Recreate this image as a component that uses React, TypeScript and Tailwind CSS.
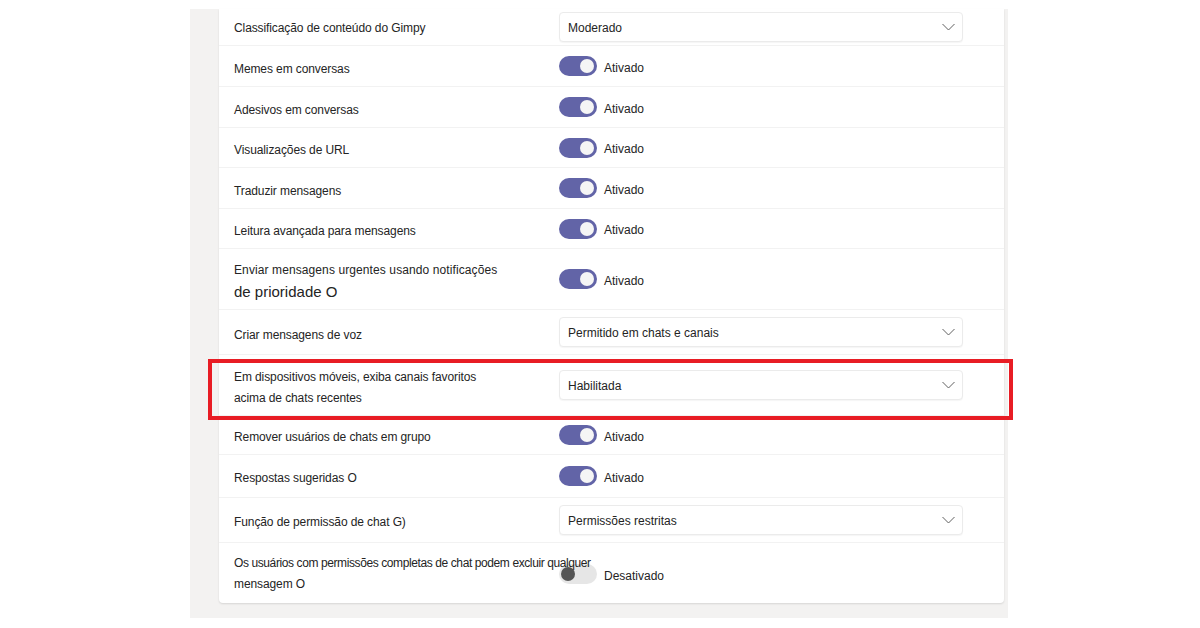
import React from 'react';

type Row = {
  label: React.ReactNode;
  kind: 'select' | 'on' | 'off';
  value?: string;
  h: string;
  nudge: string;
  boxed?: boolean;
};

const rows: Row[] = [
  { label: 'Classificação de conteúdo do Gimpy', kind: 'select', value: 'Moderado', h: 'h-[37px]', nudge: 'mt-[3px]' },
  { label: 'Memes em conversas', kind: 'on', h: 'h-[41px]', nudge: 'mt-[7px]' },
  { label: 'Adesivos em conversas', kind: 'on', h: 'h-[41px]', nudge: 'mt-[6px]' },
  { label: 'Visualizações de URL', kind: 'on', h: 'h-[40px]', nudge: 'mt-[6px]' },
  { label: 'Traduzir mensagens', kind: 'on', h: 'h-[41px]', nudge: 'mt-[6px]' },
  { label: 'Leitura avançada para mensagens', kind: 'on', h: 'h-[40px]', nudge: 'mt-[5px]' },
  {
    label: (
      <>
        <span className="tracking-[0.1px]">Enviar mensagens urgentes usando notificações</span>
        <br />
        <span className="text-[15px] leading-[21px] tracking-normal">de prioridade O</span>
      </>
    ),
    kind: 'on',
    h: 'h-[61px]',
    nudge: 'mt-[6px]',
  },
  { label: 'Criar mensagens de voz', kind: 'select', value: 'Permitido em chats e canais', h: 'h-[45px]', nudge: 'mt-[7px]' },
  {
    label: (
      <>
        Em dispositivos móveis, exiba canais favoritos
        <br />
        acima de chats recentes
      </>
    ),
    kind: 'select',
    value: 'Habilitada',
    h: 'h-[61px]',
    nudge: 'mt-[5px]',
    boxed: true,
  },
  { label: 'Remover usuários de chats em grupo', kind: 'on', h: 'h-[39px]', nudge: 'mt-[4px]' },
  { label: 'Respostas sugeridas O', kind: 'on', h: 'h-[43px]', nudge: 'mt-[4px]' },
  { label: 'Função de permissão de chat G)', kind: 'select', value: 'Permissões restritas', h: 'h-[45px]', nudge: 'mt-[4px]' },
  {
    label: (
      <>
        <span className="tracking-[-0.4px]">Os usuários com permissões completas de chat podem excluir qualquer</span>
        <br />
        mensagem O
      </>
    ),
    kind: 'off',
    h: 'h-[60px]',
    nudge: 'mt-[2px]',
  },
];

const Toggle = ({ on }: { on: boolean }) => (
  <div className="flex items-center gap-[7px]">
    {on ? (
      <div className="w-[38px] h-[20px] rounded-full bg-[#6264a7] flex items-center justify-end pr-[3px]">
        <div className="w-[14px] h-[14px] rounded-full bg-[#f5f5f5]" />
      </div>
    ) : (
      <div className="w-[38px] h-[20px] rounded-full bg-[#e6e6e6] flex items-center pl-[2px] mt-[1px]">
        <div className="w-[14px] h-[14px] rounded-full bg-[#555555]" />
      </div>
    )}
    <span className={`text-[12px] text-[#242424] ${on ? 'mt-[3px]' : 'mt-[5px]'}`}>
      {on ? 'Ativado' : 'Desativado'}
    </span>
  </div>
);

const Select = ({ value }: { value: string }) => (
  <div className="w-[404px] h-[30px] rounded-[4px] border border-[#ebebeb] bg-white shadow-[0_1px_1px_rgba(0,0,0,0.04)] flex items-center justify-between pl-[8px] pr-[7px]">
    <span className="text-[12px] text-[#242424] mt-[2px]">{value}</span>
    <svg width="13" height="8" viewBox="0 0 13 8" fill="none" stroke="#616161" strokeWidth="1">
      <path d="M0.5 1 L6.5 7 L12.5 1" />
    </svg>
  </div>
);

export default function App() {
  return (
    <div className="w-[1200px] h-[628px] bg-white pt-[9px] pl-[190px]" style={{ fontFamily: '"Liberation Sans", Arial, sans-serif' }}>
      <div className="w-[818px] h-[609px] bg-[#f3f2f1] pl-[29px] pr-[4px] pb-[16px]">
        <div className="bg-white rounded-b-[4px] shadow-[0_1px_2px_rgba(0,0,0,0.12)]">
          {rows.map((row, i) => (
            <div
              key={i}
              className={`relative flex items-center ${row.h} ${i < rows.length - 1 ? 'border-b border-[#f2f2f2]' : ''}`}
            >
              {row.boxed && (
                <div className="absolute top-[4px] -bottom-[5px] -left-[11px] -right-[9px] border-4 border-[#e81c24] pointer-events-none" />
              )}
              <div className={`w-[340px] pl-[15px] shrink-0 whitespace-nowrap text-[12px] leading-[21px] tracking-[-0.1px] text-[#242424] relative z-10 ${row.nudge}`}>
                {row.label}
              </div>
              {row.kind === 'select' && <Select value={row.value ?? ''} />}
              {row.kind === 'on' && <Toggle on />}
              {row.kind === 'off' && <Toggle on={false} />}
            </div>
          ))}
        </div>
      </div>
    </div>
  );
}
